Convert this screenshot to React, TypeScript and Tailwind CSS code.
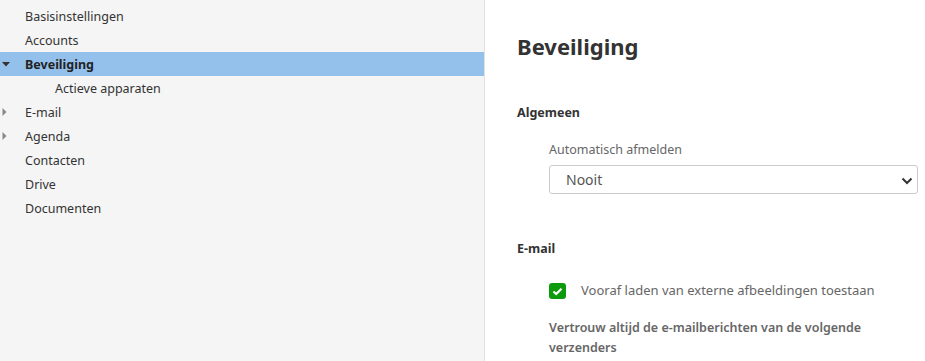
import React from "react";

const font = { fontFamily: '"Segoe UI", "Noto Sans", "Open Sans", sans-serif' };

function DownTri() {
  return (
    <svg width="10" height="6" viewBox="0 0 10 6" className="absolute left-[2px] top-[10px]">
      <path d="M0 0 L8 0 L4 4.5 Z" fill="#333" />
    </svg>
  );
}
function RightTri() {
  return (
    <svg width="6" height="10" viewBox="0 0 6 10" className="absolute left-[2px] top-[8px]">
      <path d="M0.5 0 L4.5 4 L0.5 8 Z" fill="#888" />
    </svg>
  );
}

type Item = { label: string; indent?: boolean; active?: boolean; open?: boolean; closed?: boolean };
const items: Item[] = [
  { label: "Basisinstellingen" },
  { label: "Accounts" },
  { label: "Beveiliging", active: true, open: true },
  { label: "Actieve apparaten", indent: true },
  { label: "E-mail", closed: true },
  { label: "Agenda", closed: true },
  { label: "Contacten" },
  { label: "Drive" },
  { label: "Documenten" },
];

export default function App() {
  return (
    <div className="flex w-[925px] h-[361px] overflow-hidden bg-white text-[#333]" style={font}>
      <div className="w-[485px] shrink-0 bg-[#f5f5f5] border-r border-[#e0e0e0] pt-[4px]">
        {items.map((it) => (
          <div
            key={it.label}
            className={`relative h-[24px] flex items-center pt-[2px] text-[12.5px] ${it.indent ? "pl-[55px]" : "pl-[25px]"} ${
              it.active ? "bg-[#94c1ec] font-bold text-[#222]" : "text-[#333]"
            }`}
          >
            {it.open && <DownTri />}
            {it.closed && <RightTri />}
            {it.label}
          </div>
        ))}
      </div>
      <div className="flex-1 pl-[32px] pr-[7px]">
        <h1 className="mt-[31px] text-[22px] font-bold leading-[30px] text-[#333]">Beveiliging</h1>
        <h2 className="mt-[43px] text-[12.5px] font-bold leading-[18px] text-[#333]">Algemeen</h2>
        <div className="ml-[32px] mt-[19px]">
          <div className="text-[12.5px] leading-[18px] text-[#666]">Automatisch afmelden</div>
          <div className="relative mt-[6px] h-[29px] border border-[#ccc] rounded-[3px] flex items-center pl-[16px] text-[14px] text-[#555]">
            Nooit
            <svg width="12" height="8" viewBox="0 0 12 8" className="absolute right-[4px] top-[11px]">
              <path d="M1.5 1.5 L6 6 L10.5 1.5" stroke="#333" strokeWidth="2" fill="none" />
            </svg>
          </div>
        </div>
        <h2 className="mt-[46px] text-[12.5px] font-bold leading-[18px] text-[#333]">E-mail</h2>
        <div className="ml-[32px] mt-[24px]">
          <div className="flex items-center h-[18px]">
            <div className="w-[17px] h-[16px] rounded-[3px] bg-[#0d9a0d] flex items-center justify-center">
              <svg width="11" height="9" viewBox="0 0 11 9">
                <path d="M1.5 4.5 L4.2 7 L9.5 1.8" stroke="white" strokeWidth="2.2" fill="none" />
              </svg>
            </div>
            <span className="ml-[15px] text-[13px] text-[#666]">Vooraf laden van externe afbeeldingen toestaan</span>
          </div>
          <div className="mt-[18px] text-[12.5px] leading-[20px] font-semibold text-[#666] w-[330px]">
            Vertrouw altijd de e-mailberichten van de volgende verzenders
          </div>
        </div>
      </div>
    </div>
  );
}
